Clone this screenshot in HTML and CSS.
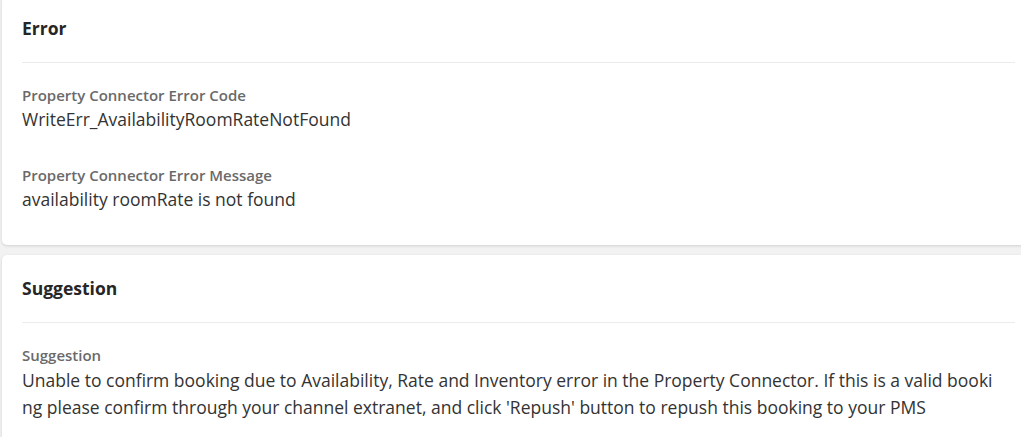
FILE: index.html
```html
<!DOCTYPE html>
<html>
<head>
<meta charset="utf-8">
<link rel="stylesheet" href="styles.css">
</head>
<body>
<div class="page">
  <section class="card card-first">
    <header class="card-head"><h2 class="card-title">Error</h2></header>
    <div class="card-body">
      <div class="field">
        <div class="field-label">Property Connector Error Code</div>
        <div class="field-value">WriteErr_AvailabilityRoomRateNotFound</div>
      </div>
      <div class="field">
        <div class="field-label">Property Connector Error Message</div>
        <div class="field-value">availability roomRate is not found</div>
      </div>
    </div>
  </section>
  <section class="card">
    <header class="card-head"><h2 class="card-title">Suggestion</h2></header>
    <div class="card-body">
      <div class="field">
        <div class="field-label">Suggestion</div>
        <div class="field-text">Unable to confirm booking due to Availability, Rate and Inventory error in the Property Connector. If this is a valid booking please confirm through your channel extranet, and click 'Repush' button to repush this booking to your PMS</div>
      </div>
    </div>
  </section>
</div>
</body>
</html>
```
FILE: styles.css
```css
html, body {
  margin: 0;
  padding: 0;
  background: #f2f2f2;
  overflow: hidden;
}
body {
  font-family: "Open Sans", "Noto Sans", sans-serif;
  color: #333;
}
.page {
  padding-left: 2px;
  display: flex;
  flex-direction: column;
  gap: 10px;
  width: 1033px;
}
.card {
  background: #fff;
  border-radius: 5px;
  box-shadow: 0 1px 3px rgba(0, 0, 0, 0.14);
  padding: 0 20px;
}
.card-first {
  margin-top: -5px;
}
.card-head {
  padding: 21px 0 22px;
  border-bottom: 1px solid #ebebeb;
}
.card-title {
  margin: 0;
  font-size: 17.5px;
  line-height: 24px;
  font-weight: 700;
  color: #262626;
}
.card-body {
  padding: 22px 18px 0 0;
}
.field {
  padding-bottom: 32px;
}
.field-label {
  font-size: 15px;
  line-height: 20px;
  font-weight: 600;
  color: #6a6a6a;
}
.field-value {
  font-size: 17.5px;
  line-height: 28px;
  color: #333;
}
.field-text {
  margin-top: 2px;
  font-size: 17.5px;
  line-height: 27px;
  color: #333;
  word-break: break-all;
}
```
